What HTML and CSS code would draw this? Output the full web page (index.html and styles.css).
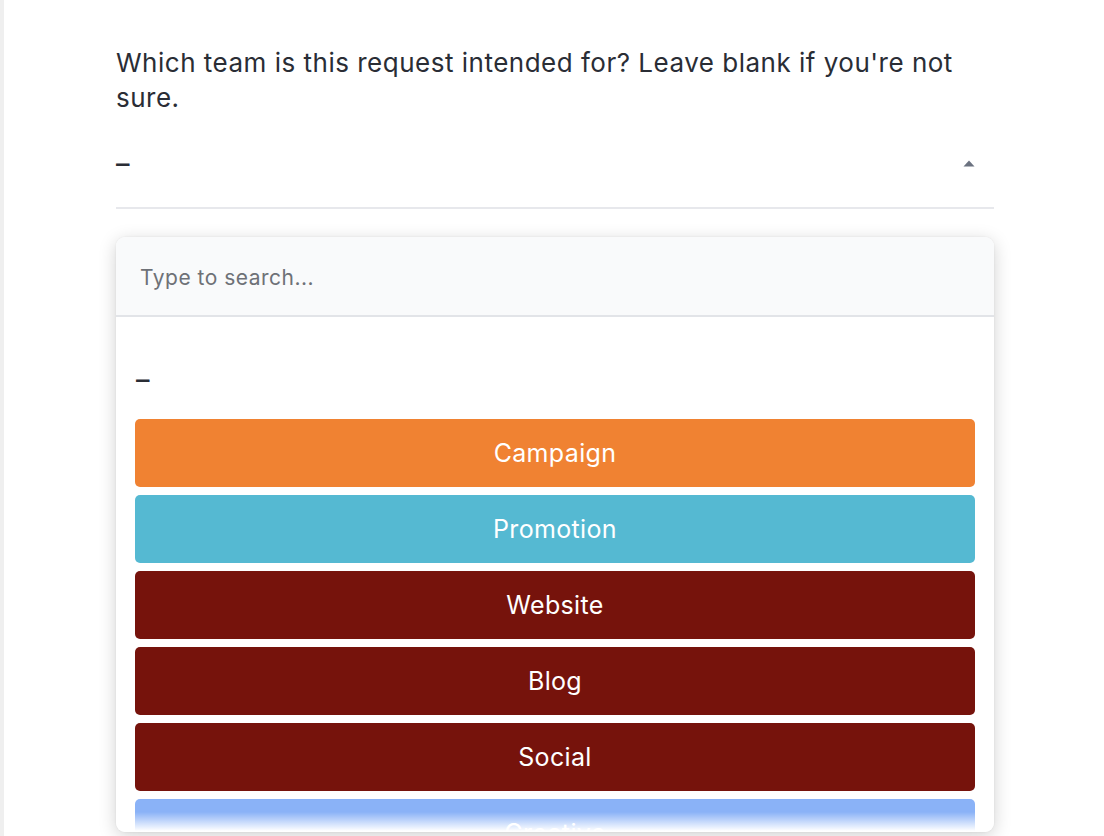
FILE: index.html
```html
<!DOCTYPE html>
<html>
<head>
<meta charset="utf-8">
<link rel="stylesheet" href="styles.css">
</head>
<body>
<div class="page">
  <div class="field">
    <p class="label">Which team is this request intended for? Leave blank if you're not sure.</p>
    <div class="select">
      <span class="value">–</span>
      <svg class="caret" width="12" height="7" viewBox="0 0 12 7"><path d="M6 0.5 L11.5 6.5 L0.5 6.5 Z" fill="#6b7280"/></svg>
    </div>
    <div class="dropdown">
      <div class="search">
        <span class="placeholder">Type to search...</span>
      </div>
      <div class="list">
        <div class="dash">–</div>
        <div class="opt campaign">Campaign</div>
        <div class="opt promotion">Promotion</div>
        <div class="opt website">Website</div>
        <div class="opt blog">Blog</div>
        <div class="opt social">Social</div>
        <div class="opt creative">Creative</div>
      </div>
      <div class="fade"></div>
    </div>
  </div>
</div>
</body>
</html>
```

FILE: styles.css
```css
html, body {
  margin: 0;
  padding: 0;
  background: #ffffff;
  height: 836px;
  overflow: hidden;
}
body {
  font-family: Inter, "Noto Sans", sans-serif;
  color: #2a2d35;
}
.page {
  border-left: 4px solid #efefef;
  height: 836px;
  box-sizing: border-box;
  padding-left: 112px;
}
.field {
  width: 878px;
}
.label {
  margin: 0;
  padding-top: 45px;
  font-size: 26px;
  line-height: 35px;
  letter-spacing: 0.5px;
}
.select {
  display: flex;
  align-items: center;
  justify-content: space-between;
  height: 94px;
  border-bottom: 2px solid #e7e8ec;
  box-sizing: border-box;
}
.value {
  font-size: 27px;
  font-weight: 500;
  line-height: 28px;
  margin-top: 5px;
}
.caret {
  margin-right: 19px;
  margin-top: 4px;
}
.dropdown {
  position: relative;
  margin-top: 28px;
  height: 595px;
  border-radius: 9px;
  background: #fff;
  box-shadow: 0 4px 18px rgba(0,0,0,0.18), 0 0 2px rgba(0,0,0,0.08);
  overflow: hidden;
}
.search {
  height: 80px;
  background: #f9fafb;
  border-bottom: 2px solid #e2e4e8;
  box-sizing: border-box;
  display: flex;
  align-items: center;
  padding-left: 24px;
  padding-top: 2px;
}
.placeholder {
  font-size: 21px;
  color: #6e7177;
  letter-spacing: 0.5px;
}
.list {
  padding: 0 19px;
  display: flex;
  flex-direction: column;
  gap: 8px;
}
.dash {
  padding: 49px 0 17px 1px;
  font-size: 27px;
  font-weight: 500;
  line-height: 28px;
}
.opt {
  height: 68px;
  border-radius: 5px;
  display: flex;
  align-items: center;
  justify-content: center;
  color: #fff;
  font-size: 25px;
  letter-spacing: 0.35px;
  flex-shrink: 0;
}
.campaign { background: #f08232; }
.promotion { background: #55b9d2; }
.website, .blog, .social { background: #76130c; }
.creative { background: #8ab2f7; }
.fade {
  position: absolute;
  left: 0;
  right: 0;
  bottom: 0;
  height: 20px;
  background: linear-gradient(to bottom, rgba(255,255,255,0), #ffffff 95%);
}
```
